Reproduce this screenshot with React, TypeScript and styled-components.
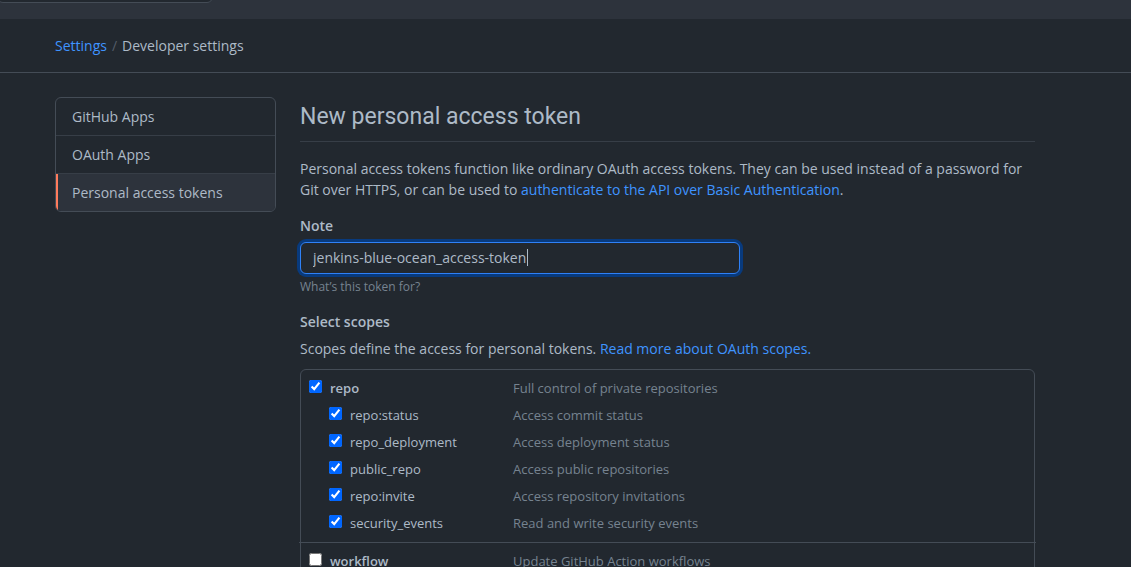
import React, { useState } from "react";
import styled, { createGlobalStyle, css } from "styled-components";

const color = {
  canvas: "#22282f",
  raised: "#2d333c",
  border: "#444c56",
  borderMuted: "#373e47",
  text: "#adbac7",
  muted: "#768390",
  link: "#3f94ff",
  focus: "#2f81f7",
  focusRing: "#083a7d",
  accent: "#ff7b5c",
};

const GlobalStyle = createGlobalStyle`
  * { box-sizing: border-box; }
  body {
    margin: 0;
    background: ${color.canvas};
    color: ${color.text};
    font-family: "Open Sans", "Liberation Sans", sans-serif;
    font-size: 14px;
    line-height: 21px;
  }
`;

const Page = styled.div`
  height: 100vh;
  overflow: hidden;
`;

const TopBar = styled.header`
  display: flex;
  align-items: flex-end;
  height: 19px;
  padding-bottom: 16px;
  background: ${color.raised};
  overflow: hidden;
`;

const Search = styled.input`
  flex: none;
  width: 216px;
  height: 30px;
  margin-left: -3px;
  border: 1px solid ${color.border};
  border-radius: 6px;
  background: ${color.canvas};
`;

const Breadcrumb = styled.nav`
  display: flex;
  gap: 5px;
  padding: 16px 55px;
  border-bottom: 1px solid ${color.border};
`;

const Separator = styled.span`
  color: #545d68;
`;

const Link = styled.a`
  color: ${color.link};
  text-decoration: none;
`;

const Layout = styled.div`
  display: grid;
  grid-template-columns: 221px minmax(0, 1fr);
  align-items: start;
  gap: 24px;
  max-width: 1090px;
  padding: 24px 55px;
`;

const Menu = styled.nav`
  border: 1px solid ${color.border};
  border-radius: 6px;
  overflow: hidden;
`;

const MenuItem = styled.a<{ $current?: boolean }>`
  display: block;
  padding: 8px 16px;
  color: ${color.text};
  text-decoration: none;

  & + & {
    border-top: 1px solid ${color.borderMuted};
  }

  ${({ $current }) =>
    $current &&
    css`
      background: ${color.raised};
      box-shadow: inset 2px 0 0 ${color.accent};
    `}
`;

const Title = styled.h1`
  margin: 0 0 16px;
  padding: 2px 0 6px;
  border-bottom: 1px solid ${color.borderMuted};
  font-family: Roboto, "Liberation Sans", sans-serif;
  font-size: 23px;
  font-weight: 400;
  line-height: 36px;
`;

const Paragraph = styled.p`
  margin: 0;
`;

const Field = styled.div`
  display: flex;
  flex-direction: column;
  margin: 15px 0;
`;

const FieldLabel = styled.label`
  margin-bottom: 6px;
  font-weight: 600;
`;

const InputWrap = styled.div`
  position: relative;
  max-width: 440px;
`;

const TextInput = styled.input`
  display: block;
  width: 100%;
  height: 32px;
  padding: 4px 12px 6px;
  border: 1px solid ${color.focus};
  border-radius: 6px;
  outline: none;
  background: ${color.canvas};
  box-shadow: 0 0 0 3px ${color.focusRing};
  color: ${color.text};
  font: inherit;
`;

const Caret = styled.span`
  position: absolute;
  top: 7px;
  left: 227px;
  width: 1px;
  height: 17px;
  background: ${color.text};
`;

const Hint = styled.p`
  margin: 4px 0 0;
  color: ${color.muted};
  font-size: 12px;
  line-height: 18px;
`;

const SectionTitle = styled.h2`
  margin: 0 0 6px;
  font-size: 14px;
  font-weight: 600;
  line-height: 21px;
`;

const ScopeBox = styled.div`
  margin-top: 10px;
  border: 1px solid ${color.border};
  border-radius: 6px;
`;

const ScopeGroup = styled.div`
  margin: 0 -2px;
  padding: 5px 10px;

  & + & {
    border-top: 1px solid ${color.border};
  }
`;

const ScopeRow = styled.div<{ $child?: boolean }>`
  display: grid;
  grid-template-columns: ${({ $child }) => ($child ? "184px" : "204px")} 1fr;
  margin-left: ${({ $child }) => ($child ? "20px" : "0")};
  font-size: 13px;
  line-height: 27px;
`;

const ScopeLabel = styled.label<{ $strong?: boolean }>`
  display: flex;
  align-items: flex-start;
  gap: 8px;
  font-weight: ${({ $strong }) => ($strong ? 600 : 400)};
`;

const Checkbox = styled.input`
  flex: none;
  width: 13px;
  height: 13px;
  margin: 5px 0 0;
  accent-color: #0066ff;
`;

const Description = styled.span`
  color: ${color.muted};
`;

type Scope = { name: string; description: string; child?: boolean };

const groups: Scope[][] = [
  [
    { name: "repo", description: "Full control of private repositories" },
    { name: "repo:status", description: "Access commit status", child: true },
    { name: "repo_deployment", description: "Access deployment status", child: true },
    { name: "public_repo", description: "Access public repositories", child: true },
    { name: "repo:invite", description: "Access repository invitations", child: true },
    { name: "security_events", description: "Read and write security events", child: true },
  ],
  [{ name: "workflow", description: "Update GitHub Action workflows" }],
];

function ScopeOption({ scope, checked }: { scope: Scope; checked: boolean }) {
  return (
    <ScopeRow $child={scope.child}>
      <ScopeLabel $strong={!scope.child}>
        <Checkbox type="checkbox" defaultChecked={checked} />
        {scope.name}
      </ScopeLabel>
      <Description>{scope.description}</Description>
    </ScopeRow>
  );
}

export default function App() {
  const [note, setNote] = useState("jenkins-blue-ocean_access-token");

  return (
    <Page>
      <GlobalStyle />
      <TopBar>
        <Search type="search" aria-label="Search" />
      </TopBar>
      <Breadcrumb aria-label="Breadcrumb">
        <Link href="#settings">Settings</Link>
        <Separator>/</Separator>
        <span>Developer settings</span>
      </Breadcrumb>
      <Layout>
        <Menu aria-label="Developer settings">
          <MenuItem href="#apps">GitHub Apps</MenuItem>
          <MenuItem href="#oauth">OAuth Apps</MenuItem>
          <MenuItem href="#tokens" $current aria-current="page">
            Personal access tokens
          </MenuItem>
        </Menu>
        <main>
          <Title>New personal access token</Title>
          <Paragraph>
            Personal access tokens function like ordinary OAuth access tokens. They can be used
            instead of a password for Git over HTTPS, or can be used to{" "}
            <Link href="#api">authenticate to the API over Basic Authentication</Link>.
          </Paragraph>
          <Field>
            <FieldLabel htmlFor="note">Note</FieldLabel>
            <InputWrap>
              <TextInput id="note" value={note} onChange={(e) => setNote(e.target.value)} />
              <Caret />
            </InputWrap>
            <Hint>What’s this token for?</Hint>
          </Field>
          <SectionTitle>Select scopes</SectionTitle>
          <Paragraph>
            Scopes define the access for personal tokens.{" "}
            <Link href="#scopes">Read more about OAuth scopes.</Link>
          </Paragraph>
          <ScopeBox>
            {groups.map((group, index) => (
              <ScopeGroup key={group[0].name}>
                {group.map((scope) => (
                  <ScopeOption key={scope.name} scope={scope} checked={index === 0} />
                ))}
              </ScopeGroup>
            ))}
          </ScopeBox>
        </main>
      </Layout>
    </Page>
  );
}
